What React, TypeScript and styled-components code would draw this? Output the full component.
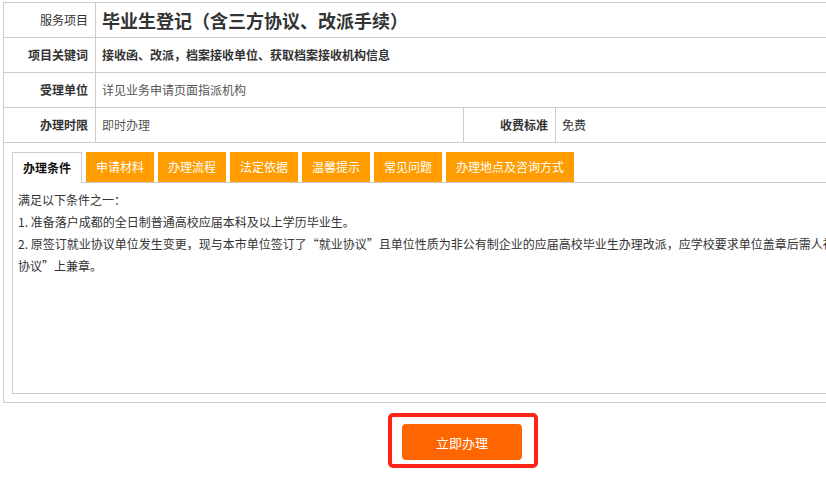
import React from 'react';
import styled, { createGlobalStyle } from 'styled-components';

const GlobalStyle = createGlobalStyle`
    html, body {
        margin: 0;
        padding: 0;
        overflow: hidden;
        background: #fff;
    }
    body {
        font-family: "Noto Sans CJK SC", "Noto Sans", sans-serif;
        font-size: 12px;
        color: #333;
    }
`

const Page = styled.div`
    width: 920px;
    padding: 2px 0 0 3px;
`

const InfoTable = styled.div`
    border-top: 1px solid #ccc;
    border-left: 1px solid #ccc;
`

const Row = styled.div<{ $cols?: string }>`
    display: grid;
    grid-template-columns: ${p => p.$cols || '92px 1fr'};
`

const Cell = styled.div`
    box-sizing: border-box;
    height: 35px;
    border-right: 1px solid #ccc;
    border-bottom: 1px solid #ccc;
    display: flex;
    align-items: center;
    line-height: 20px;
    white-space: nowrap;
    overflow: hidden;
`

const Label = styled(Cell)<{ $light?: boolean }>`
    justify-content: flex-end;
    padding-right: 7px;
    font-weight: ${p => p.$light ? 'normal' : 'bold'};
    color: #333;
`

const Value = styled(Cell)<{ $strong?: boolean; $muted?: boolean }>`
    padding-left: 6px;
    font-weight: ${p => p.$strong ? 'bold' : 'normal'};
    color: ${p => p.$muted ? '#555' : '#333'};
`

const Title = styled.h1`
    margin: 0;
    font-size: 18px;
    font-weight: bold;
    color: #333;
    line-height: 24px;
`

const Panel = styled.div`
    border: 1px solid #ccc;
    border-top: none;
    padding: 9px 8px 8px 8px;
`

const TabBar = styled.div`
    display: flex;
    gap: 4px;
    border-bottom: 1px solid #ccc;
    height: 30px;
`

const Tab = styled.div<{ $active?: boolean }>`
    box-sizing: border-box;
    height: ${p => p.$active ? '31px' : '30px'};
    padding: 0 10px;
    display: flex;
    align-items: center;
    font-size: 12px;
    line-height: 16px;
    background: ${p => p.$active ? '#fff' : '#ff9c00'};
    color: ${p => p.$active ? '#111' : '#fff'};
    font-weight: ${p => p.$active ? 'bold' : 'normal'};
    border: ${p => p.$active ? '1px solid #ccc' : 'none'};
    border-bottom: none;
    white-space: nowrap;
`

const Content = styled.div`
    box-sizing: border-box;
    height: 211px;
    border: 1px solid #ccc;
    border-top: none;
    padding: 6px 5px;
`

const Para = styled.p`
    margin: 0;
    line-height: 22px;
    color: #333;
`

const ActionBar = styled.div`
    display: flex;
    justify-content: center;
    padding-top: 10px;
`

const Highlight = styled.div`
    display: inline-flex;
    border: 4px solid #ff2417;
    border-radius: 5px;
    padding: 7px 12px 4px 10px;
`

const ActionButton = styled.button`
    width: 120px;
    height: 36px;
    border: none;
    border-radius: 4px;
    background: #ff6600;
    color: #fff;
    font-family: inherit;
    font-size: 13px;
    cursor: pointer;
`

const tabs = ['办理条件', '申请材料', '办理流程', '法定依据', '温馨提示', '常见问题', '办理地点及咨询方式']

const App = () => {
    return (
        <>
            <GlobalStyle />
            <Page>
                <InfoTable>
                    <Row>
                        <Label $light>服务项目</Label>
                        <Value><Title>毕业生登记（含三方协议、改派手续）</Title></Value>
                    </Row>
                    <Row>
                        <Label>项目关键词</Label>
                        <Value $strong>接收函、改派，档案接收单位、获取档案接收机构信息</Value>
                    </Row>
                    <Row>
                        <Label>受理单位</Label>
                        <Value $muted>详见业务申请页面指派机构</Value>
                    </Row>
                    <Row $cols="92px 368px 92px 1fr">
                        <Label>办理时限</Label>
                        <Value $muted>即时办理</Value>
                        <Label>收费标准</Label>
                        <Value>免费</Value>
                    </Row>
                </InfoTable>
                <Panel>
                    <TabBar>
                        {tabs.map((t, i) => <Tab key={t} $active={i === 0}>{t}</Tab>)}
                    </TabBar>
                    <Content>
                        <Para>满足以下条件之一：</Para>
                        <Para>1. 准备落户成都的全日制普通高校应届本科及以上学历毕业生。</Para>
                        <Para>2. 原签订就业协议单位发生变更，现与本市单位签订了“就业协议”且单位性质为非公有制企业的应届高校毕业生办理改派，应学校要求单位盖章后需人社部门在“就业协议”上兼章。</Para>
                    </Content>
                </Panel>
                <ActionBar>
                    <Highlight>
                        <ActionButton>立即办理</ActionButton>
                    </Highlight>
                </ActionBar>
            </Page>
        </>
    )
}

export default App;
